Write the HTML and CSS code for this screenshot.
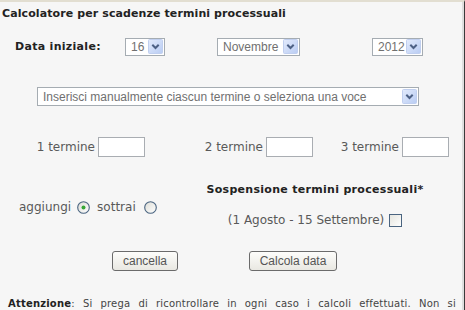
FILE: index.html
```html
<!DOCTYPE html>
<html lang="it">
<head>
<meta charset="utf-8">
<title>Calcolatore per scadenze termini processuali</title>
<link rel="stylesheet" href="styles.css">
</head>
<body>
<div class="page">
  <h1 class="title">Calcolatore per scadenze termini processuali</h1>

  <div class="date-row">
    <span class="date-label">Data iniziale:</span>
    <div class="select sel-day">
      <span class="sel-value">16</span>
      <span class="sel-arrow"><svg width="15" height="15" viewBox="0 0 15 15"><defs><linearGradient id="ga" x1="0" y1="0" x2="1" y2="1"><stop offset="0" stop-color="#e3ebfc"/><stop offset="1" stop-color="#b9ccf3"/></linearGradient></defs><rect x="0.5" y="0.5" width="14" height="14" rx="1" fill="url(#ga)" stroke="#c0cfef"/><path d="M4.3 5.8 L7.5 9 L10.7 5.8" fill="none" stroke="#4d6185" stroke-width="2"/></svg></span>
    </div>
    <div class="select sel-month">
      <span class="sel-value">Novembre</span>
      <span class="sel-arrow"><svg width="15" height="15" viewBox="0 0 15 15"><rect x="0.5" y="0.5" width="14" height="14" rx="1" fill="url(#ga)" stroke="#c0cfef"/><path d="M4.3 5.8 L7.5 9 L10.7 5.8" fill="none" stroke="#4d6185" stroke-width="2"/></svg></span>
    </div>
    <div class="select sel-year">
      <span class="sel-value">2012</span>
      <span class="sel-arrow"><svg width="15" height="15" viewBox="0 0 15 15"><rect x="0.5" y="0.5" width="14" height="14" rx="1" fill="url(#ga)" stroke="#c0cfef"/><path d="M4.3 5.8 L7.5 9 L10.7 5.8" fill="none" stroke="#4d6185" stroke-width="2"/></svg></span>
    </div>
  </div>

  <div class="type-row">
    <div class="select sel-type">
      <span class="sel-value">Inserisci manualmente ciascun termine o seleziona una voce</span>
      <span class="sel-arrow"><svg width="15" height="15" viewBox="0 0 15 15"><rect x="0.5" y="0.5" width="14" height="14" rx="1" fill="url(#ga)" stroke="#c0cfef"/><path d="M4.3 5.8 L7.5 9 L10.7 5.8" fill="none" stroke="#4d6185" stroke-width="2"/></svg></span>
    </div>
  </div>

  <div class="terms-row">
    <label class="term">1 termine <input class="term-input" type="text"></label>
    <label class="term">2 termine <input class="term-input" type="text"></label>
    <label class="term">3 termine <input class="term-input" type="text"></label>
  </div>

  <div class="options-row">
    <div class="op-group">
      <span class="op-text">aggiungi</span>
      <span class="radio radio-add"><svg width="13" height="13" viewBox="0 0 13 13"><defs><linearGradient id="gr" x1="0" y1="0" x2="1" y2="1"><stop offset="0" stop-color="#dcdcd6"/><stop offset="1" stop-color="#ffffff"/></linearGradient></defs><circle cx="6.5" cy="6.5" r="5.8" fill="url(#gr)" stroke="#4a6480" stroke-width="1.1"/><circle cx="6.5" cy="6.5" r="2" fill="#35a635"/></svg></span>
      <span class="op-text op-sub">sottrai</span>
      <span class="radio radio-sub"><svg width="13" height="13" viewBox="0 0 13 13"><circle cx="6.5" cy="6.5" r="5.8" fill="url(#gr)" stroke="#4a6480" stroke-width="1.1"/></svg></span>
    </div>
    <div class="susp">
      <div class="susp-title">Sospensione termini processuali*</div>
      <div class="susp-line">(1 Agosto - 15 Settembre) <span class="check"><svg width="13" height="13" viewBox="0 0 13 13"><defs><linearGradient id="gc" x1="0" y1="0" x2="1" y2="1"><stop offset="0" stop-color="#e4e4de"/><stop offset="1" stop-color="#ffffff"/></linearGradient></defs><rect x="0.5" y="0.5" width="12" height="12" fill="url(#gc)" stroke="#4a6480"/></svg></span></div>
    </div>
  </div>

  <div class="buttons-row">
    <button class="btn btn-clear" type="button">cancella</button>
    <button class="btn btn-calc" type="button">Calcola data</button>
  </div>

  <p class="notice"><b>Attenzione</b>: Si prega di ricontrollare in ogni caso i calcoli effettuati. Non si</p>
</div>
</body>
</html>
```

FILE: styles.css
```css
html, body {
  margin: 0;
  padding: 0;
}

body {
  width: 465px;
  height: 310px;
  overflow: hidden;
  background: #f6f6f6;
  font-family: "DejaVu Sans", Verdana, sans-serif;
  color: #595959;
}

.page {
  box-sizing: border-box;
  width: 465px;
  height: 310px;
  border-top: 2px solid #e2ded1;
  border-right: 1px solid #3a3a3a;
  box-shadow: inset -2px 0 0 #dedede;
  overflow: hidden;
}

.title {
  margin: 5px 0 0 2px;
  font-size: 11px;
  line-height: 14px;
  font-weight: bold;
  color: #222;
  letter-spacing: 0.1px;
}

.date-row {
  display: grid;
  grid-template-columns: 110px 92px 155px auto;
  align-items: center;
  margin-top: 16px;
  padding-left: 15px;
  height: 19px;
}

.date-label {
  font-size: 11px;
  font-weight: bold;
  color: #222;
  letter-spacing: 0.3px;
}

.select {
  box-sizing: border-box;
  display: flex;
  align-items: center;
  justify-content: space-between;
  height: 18px;
  padding: 0 1px 0 5px;
  border: 1px solid #a5acb2;
  background: #fff;
  font-family: "Liberation Sans", Arial, sans-serif;
  font-size: 12px;
  color: #707070;
}

.sel-arrow {
  display: flex;
  width: 15px;
  height: 15px;
}

.sel-day { width: 40px; }
.sel-month { width: 83px; }
.sel-year { width: 51px; }

.type-row {
  margin-top: 31px;
  padding-left: 37px;
}

.sel-type {
  width: 382px;
  height: 19px;
}

.terms-row {
  display: grid;
  grid-template-columns: 145px 168px 136px;
  margin-top: 31px;
  height: 20px;
}

.term {
  display: flex;
  justify-content: flex-end;
  align-items: center;
  gap: 3px;
  font-size: 12px;
  color: #595959;
}

.term-input {
  box-sizing: border-box;
  width: 47px;
  height: 20px;
  margin: 0;
  border: 1px solid #a9adb2;
  background: #fff;
}

.options-row {
  display: grid;
  grid-template-columns: 170px 290px;
  margin-top: 26px;
}

.op-group {
  display: flex;
  align-items: center;
  margin-top: 17px;
  padding-left: 19px;
  height: 14px;
  font-size: 12px;
  color: #595959;
}

.radio-add { margin-left: 6px; }
.op-sub { margin-left: 7px; }
.radio-sub { margin-left: 8px; }

.radio, .check {
  display: flex;
  width: 13px;
  height: 13px;
}

.susp {
  display: flex;
  flex-direction: column;
  align-items: center;
}

.susp-title {
  font-size: 11px;
  line-height: 14px;
  font-weight: bold;
  color: #222;
  letter-spacing: 0.3px;
}

.susp-line {
  display: flex;
  align-items: center;
  gap: 5px;
  margin-top: 16px;
  font-size: 12px;
  line-height: 14px;
  color: #595959;
}

.buttons-row {
  display: flex;
  gap: 71px;
  margin-top: 24px;
  padding-left: 112px;
}

.btn {
  box-sizing: border-box;
  height: 20px;
  margin: 0;
  padding: 0;
  border: 1px solid #6b6b6b;
  border-radius: 3px;
  background: linear-gradient(#fdfdfb, #e9e8e2);
  font-family: "Liberation Sans", Arial, sans-serif;
  font-size: 12px;
  color: #555;
}

.btn-clear { width: 66px; }
.btn-calc { width: 88px; }

.notice {
  margin: 26px 8px 0 8px;
  font-size: 10px;
  line-height: 13px;
  color: #444;
  text-align: justify;
  text-align-last: justify;
  letter-spacing: 0.2px;
}

.notice b {
  color: #222;
}
```
